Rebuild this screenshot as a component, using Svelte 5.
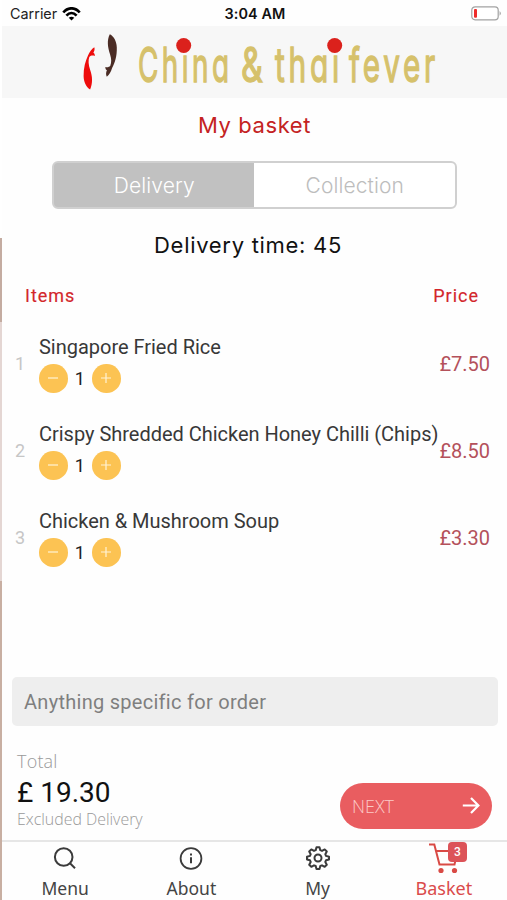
<script>
  const items = [
    { name: 'Singapore Fried Rice', qty: 1, price: '£7.50' },
    { name: 'Crispy Shredded Chicken Honey Chilli (Chips)', qty: 1, price: '£8.50' },
    { name: 'Chicken & Mushroom Soup', qty: 1, price: '£3.30' },
  ];
</script>

<div class="screen">
  <div class="status">
    <div class="carrier">
      <span>Carrier</span>
      <svg width="19" height="14" viewBox="0 0 19 14" fill="none" stroke="#000" stroke-width="2.7">
        <path d="M1.3 5.5C6-.1 13-.1 17.7 5.5" />
        <path d="M4.4 8.6c3.2-3.5 7-3.5 10.2 0" />
        <path d="M9.5 13.6 6.7 10.8q2.8-2.3 5.6 0z" fill="#000" stroke="none" />
      </svg>
    </div>
    <span class="clock">3:04 AM</span>
    <svg class="battery" width="31" height="15" viewBox="0 0 31 15">
      <rect x=".8" y=".8" width="26.4" height="13" rx="3.3" fill="#fff" stroke="#a2a2a2" stroke-width="1.2" />
      <rect x="3" y="3" width="3" height="8.8" rx="1" fill="#ee2c2b" />
      <path d="M28.6 5q2.4 2.4 0 4.8z" fill="#999" />
    </svg>
  </div>

  <header>
    <svg width="505" height="72" viewBox="2 26 505 72">
      <path d="M94.3 47.3c.7 2.2 0 3.7-.9 5.4 1 .4 1.3 1.3 1.5 3.3-2.3-.8-4-.6-5.6.9-1.2 3.5-.9 7.5.9 13 2.3 6.5 2.7 13-.1 19.6-4-2.5-6.4-7.5-6.5-13.5-.1-8 1.8-15 4.4-20.5 1.5-3.5 3.5-6.5 6.300-8.200z" fill="#ee0c0c" />
      <path d="M109.8 34.3c3.8 1.8 6.8 6.7 7 13.2.2 9-1.8 15-4.7 20.5-1.2 3.7-2.6 6.7-5.3 8.8-1.1-2.3-.8-4.3.1-6.5-1-.5-1.5-1.4-1.6-3.3 2.3.6 3.8 0 5-1.3 1.3-3.7 1.2-6.7-.2-11.200-2.400-7.500-3.400-14-.3-20.200z" fill="#4b2c25" />
      <g class="logo">
        <text x="138" y="81.5" textLength="94.5" lengthAdjust="spacingAndGlyphs">China</text>
        <text x="241" y="81.5" textLength="26" lengthAdjust="spacingAndGlyphs">&amp;</text>
        <text x="275" y="81.5" textLength="68" lengthAdjust="spacingAndGlyphs">thai</text>
        <text x="349" y="81.5" textLength="90" lengthAdjust="spacingAndGlyphs">fever</text>
      </g>
      <circle cx="183.7" cy="45.5" r="7.5" fill="#db211c" />
      <circle cx="334.7" cy="45.5" r="7.5" fill="#db211c" />
    </svg>
  </header>

  <h1>My basket</h1>

  <div class="segments">
    <div class="seg on">Delivery</div>
    <div class="seg">Collection</div>
  </div>

  <div class="time">Delivery time: 45</div>

  <div class="heads"><span>Items</span><span>Price</span></div>

  <div class="list">
    {#each items as item, i}
      <div class="row">
        <span class="num">{i + 1}</span>
        <div class="body">
          <div class="name">{item.name}</div>
          <div class="stepper">
            <button aria-label="Remove one"><svg width="12" height="12" viewBox="0 0 12 12"><path d="M1 6h10" /></svg></button>
            <span>{item.qty}</span>
            <button aria-label="Add one"><svg width="12" height="12" viewBox="0 0 12 12"><path d="M1 6h10M6 1v10" /></svg></button>
          </div>
        </div>
        <span class="price">{item.price}</span>
      </div>
    {/each}
  </div>

  <div class="note">Anything specific for order</div>

  <div class="summary">
    <div class="sums">
      <div class="total">Total</div>
      <div class="amount">£ 19.30</div>
      <div class="excluded">Excluded Delivery</div>
    </div>
    <button class="next">
      <span>NEXT</span>
      <svg width="18" height="18" viewBox="0 0 18 18" fill="none" stroke="#fff" stroke-width="2.2"><path d="M.8 8.500h15.200M9 1 16.400 8.500 9 16" /></svg>
    </button>
  </div>

  <nav>
    <div class="tab">
      <svg width="26" height="26" viewBox="0 0 26 26" fill="none" stroke="#3b3b3b" stroke-width="2"><circle cx="11.7" cy="12" r="8.8" /><path d="m18 18.3 5 5" /></svg>
      <span>Menu</span>
    </div>
    <div class="tab">
      <svg width="26" height="26" viewBox="0 0 26 26" fill="none" stroke="#3b3b3b" stroke-width="1.8"><circle cx="13" cy="13.500" r="10.4" /><path d="M13 12.300v5.900M13 8.500v2" stroke-width="2" /></svg>
      <span>About</span>
    </div>
    <div class="tab">
      <svg width="26" height="26" viewBox="0 0 26 26" fill="none" stroke="#3b3b3b" stroke-width="2" stroke-linejoin="round"><circle cx="13" cy="13" r="3.5" /><path d="M11.5 2.2h3l.8 3 1.7.7 2.7-1.5 2.1 2.1-1.5 2.700.7 1.700 3 .8v2.800l-3 .8-.7 1.700 1.500 2.700-2.100 2.100-2.700-1.500-1.700.7-.8 3h-3l-.8-3-1.700-.7-2.700 1.500-2.100-2.100 1.500-2.700-.7-1.700-3-.8v-2.800l3-.8.7-1.700-1.500-2.700 2.100-2.100L9 5.900l1.700-.7z" /></svg>
      <span>My</span>
    </div>
    <div class="tab active">
      <div class="cart">
        <svg width="32" height="32" viewBox="0 0 32 32" fill="none" stroke="#d94a45" stroke-width="2"><path d="M1 2.500h5.300l5.200 20h15L29.500 9H8.500" /><circle cx="13" cy="28.500" r="2.600" fill="#d94a45" stroke="none" /><circle cx="26.500" cy="28.500" r="2.600" fill="#d94a45" stroke="none" /></svg>
        <b>3</b>
      </div>
      <span>Basket</span>
    </div>
  </nav>
</div>

<style>
  :global(body) { margin: 0; }
  .screen {
    box-sizing: border-box; width: 507px; height: 900px; overflow: hidden;
    display: flex; flex-direction: column; padding-left: 2px;
    font-family: Roboto, sans-serif; color: #333;
    background: linear-gradient(#fff 238px, #c4aca1 238px, #c4aca1 322px, #e4d6d3 322px, #e4d6d3 581px, #c8afa2 581px) 0 0 / 2px 900px no-repeat, #fefefe;
  }
  .status {
    height: 26px; flex: none; display: grid; grid-template-columns: 1fr auto 1fr;
    align-items: center; padding: 1px 5px 0 8px; box-sizing: border-box;
    font: 14.4px Inter, sans-serif; color: #222;
  }
  .carrier { display: flex; align-items: center; gap: 5px; }
  .clock { font-weight: 600; color: #111; letter-spacing: .1px; margin-right: 2px; }
  .battery { justify-self: end; }
  header { height: 72px; flex: none; background: #f7f7f7; }
  header svg { display: block; }
  .logo text {
    font-family: Inter, sans-serif; font-size: 48px; font-weight: 400; font-feature-settings: 'cv11';
    letter-spacing: 6px; fill: #d6c16b; stroke: #d6c16b; stroke-width: 1.4;
  }
  h1 {
    margin: 12px 0 0; flex: none; height: 32px; text-align: center;
    font: 400 22px/31px Inter, sans-serif; letter-spacing: .6px; color: #c42222;
  }
  .segments {
    display: flex; width: 405px; height: 48px; margin: 19px 0 0 50px; flex: none;
    box-sizing: border-box; border: 2px solid #d0d0d0; border-radius: 6px; overflow: hidden;
    background: linear-gradient(90deg, #c1c1c1 50%, #fff 50%) border-box;
  }
  .seg { flex: 1; text-align: center; font: 300 21px/45px Inter, sans-serif; letter-spacing: .1px; color: #bdbdbd; }
  .seg.on { color: #fff; }
  .time {
    margin: 20px 0 0; flex: none; height: 32px; padding-right: 13px; text-align: center;
    font: 22px/32px Inter, sans-serif; letter-spacing: .7px; color: #111;
  }
  .heads {
    display: flex; flex: none; justify-content: space-between; margin-top: 22px; padding: 0 28px 0 23px;
    font-size: 18px; line-height: 26px; letter-spacing: 1px; color: #d3262b; -webkit-text-stroke: .15px #d3262b;
  }
  .list { height: 342px; margin-top: 26px; flex: none; }
  .row { display: flex; height: 87px; padding: 0 17px 0 13px; }
  .num { width: 24px; padding-top: 17px; line-height: 24px; font-size: 18px; color: #c6c6c6; }
  .body { flex: 1; min-width: 0; white-space: nowrap; }
  .name { font-size: 20px; line-height: 24px; letter-spacing: -.02px; color: #383838; }
  .stepper { display: flex; align-items: center; gap: 7.2px; margin-top: 5px; font-size: 18px; color: #222; }
  .stepper button {
    width: 28.5px; height: 28.5px; padding: 0; border: 0; border-radius: 50%; background: #fcc353;
    display: flex; align-items: center; justify-content: center;
  }
  .stepper path { stroke: #fff3d6; stroke-width: 1.2; }
  .price { padding-top: 16px; font-size: 20px; line-height: 26px; color: #b4515b; }
  .note {
    flex: none; height: 49px; margin: 0 9px 0 10px; padding-left: 12px; box-sizing: border-box;
    border-radius: 5px; background: #eee; font-size: 20px; line-height: 50px; letter-spacing: .28px; color: #7f7f7f;
  }
  .summary {
    display: flex; justify-content: space-between; flex: none; height: 114px;
    padding: 0 15px; box-sizing: border-box;
  }
  .sums { padding-top: 23px; font-family: 'Open Sans', sans-serif; font-weight: 300; color: #999; }
  .total { font-size: 18px; line-height: 24px; letter-spacing: .2px; }
  .amount { font: 400 28px/38px Roboto, sans-serif; color: #111; padding-top: 1px; height: 37px; }
  .excluded { font-size: 15.9px; line-height: 16px; }
  .next {
    width: 152px; height: 46px; margin-top: 57px; padding: 0 12px; border: 0; border-radius: 23px;
    background: #e95d60; color: #fcc9c6; display: flex; align-items: center; justify-content: space-between;
    font: 300 18px 'Open Sans', sans-serif;
  }
  nav { flex: none; height: 60px; box-sizing: border-box; border-top: 2px solid #e6e6e6; display: flex; }
  .tab { width: 126.7px; display: flex; flex-direction: column; align-items: center; color: #444; }
  .tab > svg { margin-top: 3px; height: 26px; }
  .tab > span { font: 17.5px/24px 'Noto Sans', sans-serif; margin-top: 5px; }
  .cart { position: relative; height: 29px; width: 32px; }
  .cart b {
    position: absolute; left: 20px; top: 0; width: 19px; height: 20px; border-radius: 4px;
    background: #dc5358; color: #fff; font: 500 12px/20px Roboto, sans-serif; text-align: center;
  }
  .tab.active { color: #da4b4b; }
  .tab.active > span { font-size: 18px; }
</style>
